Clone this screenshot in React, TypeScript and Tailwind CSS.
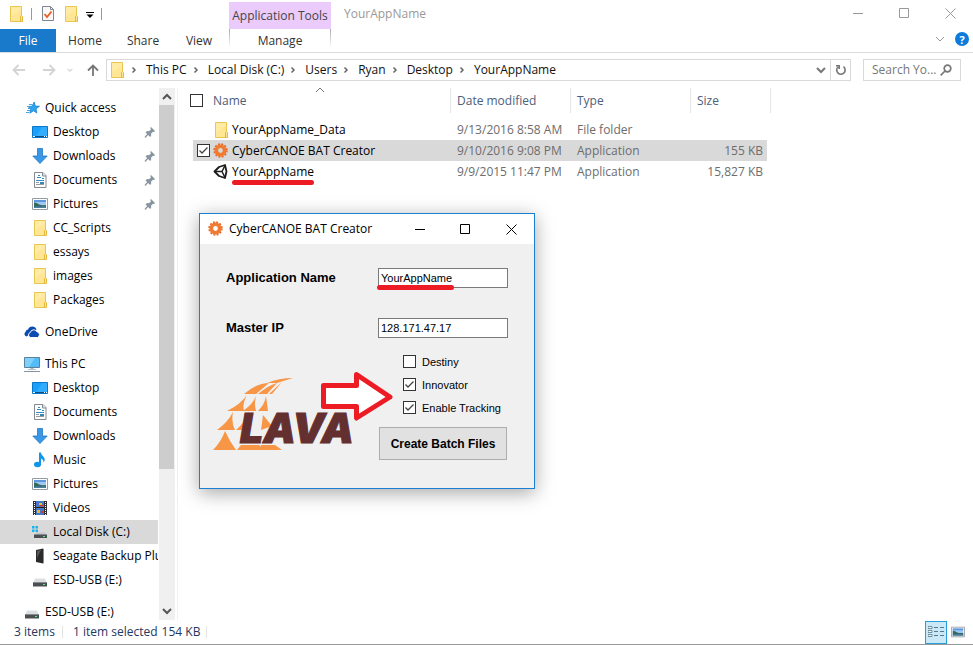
import React, { type ReactNode } from 'react';

type IconProps = { className?: string };

const FolderIcon = ({ className = 'h-4 w-4' }: IconProps) => (
  <svg viewBox="0 0 16 16" className={className} aria-hidden="true">
    <path d="M2.500.5h11v15h-11z" fill="#ffe695" stroke="#eac64f" />
    <path d="M3 1h10v3L3 10z" fill="#ffefae" opacity=".6" />
    <path d="M12.500 15.500v-5l1-1 1 1v5z" fill="#ffe695" stroke="#e4b83c" />
  </svg>
);

const PropertiesIcon = () => (
  <svg viewBox="0 0 14 17" className="h-[17px] w-3.5" aria-hidden="true">
    <path d="M1.500 1.500h8l3 3v11h-11z" fill="#f8f8f8" stroke="#7e8790" />
    <path d="M9.500 1.500v3h3" fill="none" stroke="#7e8790" />
    <path d="M3.500 9l2.500 3 4.500-5.500" fill="none" stroke="#ef5a22" strokeWidth="1.800" />
  </svg>
);

const StarIcon = ({ className = 'h-4 w-4' }: IconProps) => (
  <svg viewBox="0 0 16 16" className={className} aria-hidden="true">
    <path d="M10.200 2l1 4 4.300.3-3.500 2.400.8 4.300-3.300-2.200-3.700 2.400 1.100-4.200L4 6.500l4.200-.3z" fill="#2aa5ee" stroke="#1681cd" strokeWidth=".8" />
    <path d="M5 4.500h3.500M3 6.500h3M4 8.500h2M3 10.500h3M2 12.500h3" stroke="#43a6e4" />
  </svg>
);

const DesktopIcon = ({ className = 'h-4 w-4' }: IconProps) => (
  <svg viewBox="0 0 16 16" className={className} aria-hidden="true">
    <path d="M.5 2.500h15v11H.5z" fill="#18a0fb" stroke="#0b76c5" />
    <path d="M10 3h5v9H4z" fill="#4db8ff" opacity=".5" />
    <path d="M1 12.500h14" stroke="#0a4f88" />
    <path d="M1 12.500h2M12 12.500h1M14 12.500h1" stroke="#fff" />
  </svg>
);

const DownloadIcon = ({ className = 'h-4 w-4' }: IconProps) => (
  <svg viewBox="0 0 16 16" className={className} aria-hidden="true">
    <path d="M5.500.5h5V8h4.700L8 15.500.8 8h4.700z" fill="#3997e6" stroke="#2577c4" strokeWidth=".8" />
  </svg>
);

const DocumentIcon = ({ className = 'h-4 w-4' }: IconProps) => (
  <svg viewBox="0 0 16 16" className={className} aria-hidden="true">
    <path d="M2.500.5h8.500l3 3v12H2.500z" fill="#fff" stroke="#84898d" />
    <path d="M10.500.5v3.500h3.500" fill="#e8e8e8" stroke="#84898d" />
    <path d="M6 3.500h2M5 5.500h4M10 6.500h2M4 8.500h8" stroke="#2c8fcb" />
    <path d="M4 10.500h3M4 12.500h8" stroke="#9a9a9a" />
    <path d="M8 10h4v2H8z" fill="#3987b0" />
  </svg>
);

const PictureIcon = ({ className = 'h-4 w-4' }: IconProps) => (
  <svg viewBox="0 0 16 16" className={className} aria-hidden="true">
    <path d="M.5 2.500h15v11H.5z" fill="#fff" stroke="#969ba0" />
    <path d="M2 4h12v8H2z" fill="#9cc8f3" />
    <path d="M2 4h12v2H2z" fill="#5c96e0" />
    <path d="M2 6.500c3 0 4 2 7 2.500s4 0 5 0v3H2z" fill="#37675c" />
    <path d="M2 10.500h12V12H2z" fill="#4a7fa5" />
  </svg>
);

const CloudIcon = ({ className = 'h-4 w-4' }: IconProps) => (
  <svg viewBox="0 0 16 16" className={className} aria-hidden="true">
    <path d="M2.500 12.500A2.500 2.500 0 0 1 1.500 8 3 3 0 0 1 4 5.500 4.500 4.500 0 0 1 12.500 5.500" fill="#0c4bb0" />
    <path d="M6.500 13.500a2.600 2.600 0 0 1-.2-5 3.500 3.500 0 0 1 6.500-.8A3 3 0 0 1 13.500 13.500z" fill="#0c4bb0" stroke="#fff" strokeWidth="1" />
  </svg>
);

const ComputerIcon = ({ className = 'h-4 w-4' }: IconProps) => (
  <svg viewBox="0 0 16 16" className={className} aria-hidden="true">
    <path d="M.5 1.500h15v10H.5z" fill="#54bcf8" stroke="#5b8296" />
    <path d="M1 2h10L5 11H1z" fill="#93d8ff" opacity=".7" />
    <path d="M6.500 12h3v1h-3z" fill="#aab7c0" />
    <path d="M4 13.500h8" stroke="#b8c3cc" />
    <path d="M0 15.500h16" stroke="#8494a3" />
  </svg>
);

const MusicIcon = ({ className = 'h-4 w-4' }: IconProps) => (
  <svg viewBox="0 0 16 16" className={className} aria-hidden="true">
    <ellipse cx="5.500" cy="12.500" rx="3.500" ry="2.800" fill="#1095ea" />
    <path d="M7 .5h2c0 3 4 4 3.700 7.500-.1 1.300-.7 2-1.200 2.500.3-2-.8-3.300-2.500-4v6H7z" fill="#1095ea" />
  </svg>
);

const VideoIcon = ({ className = 'h-4 w-4' }: IconProps) => (
  <svg viewBox="0 0 16 16" className={className} aria-hidden="true">
    <path d="M1 1h14v14H1z" fill="#2f2f33" />
    <path d="M4 1h8v14H4z" fill="#4879c9" />
    <path d="M4 7.500h8" stroke="#222" />
    <path d="M7 3h3v2H7zM5 10h3v3H5z" fill="#f2b632" />
    <path d="M8 5h3v1.500H8zM9 11h2v2H9z" fill="#c93a2b" />
    <path d="M2.500 2v13M13.500 2v13" stroke="#fff" strokeDasharray="1 1" />
  </svg>
);

const DriveIcon = ({ className = 'h-4 w-4' }: IconProps) => (
  <svg viewBox="0 0 16 16" className={className} aria-hidden="true">
    <path d="M3 6.500h10l1.500 4h-13z" fill="#dcdfe1" />
    <path d="M1 10h14v4.500H1z" fill="#4b4f52" />
    <path d="M1 10.500h14" stroke="#85898c" />
    <path d="M11 12h2v1h-2z" fill="#4cf06a" />
  </svg>
);

const SystemDriveIcon = ({ className = 'h-4 w-4' }: IconProps) => (
  <svg viewBox="0 0 16 16" className={className} aria-hidden="true">
    <path d="M0 2h2.500v2.500H0zM3.500 2H6v2.500H3.500zM0 5.500h2.500V8H0zM3.500 5.500H6V8H3.500z" fill="#18b4f0" />
    <path d="M4 8.500h9l1.500 2.500h-12z" fill="#c4c8ca" />
    <path d="M2 10.500h13v3.500H2z" fill="#4b4f52" />
    <path d="M11 12h2v1h-2z" fill="#4cf06a" />
  </svg>
);

const BackupDriveIcon = ({ className = 'h-4 w-4' }: IconProps) => (
  <svg viewBox="0 0 16 16" className={className} aria-hidden="true">
    <path d="M4 2l7-1.500v15L4 14z" fill="#2b2b2b" />
    <path d="M11 .5l1 .5v14l-1 .5z" fill="#8a8a8a" />
    <path d="M5 3l4-1-4 8z" fill="#565656" />
  </svg>
);

const GearIcon = ({ className = 'h-4 w-4' }: IconProps) => (
  <svg viewBox="0 0 16 16" className={className} aria-hidden="true">
    <circle cx="7.500" cy="7.500" r="6.300" fill="none" stroke="#e2692a" strokeWidth="1.800" strokeDasharray="1.900 1.399" />
    <circle cx="7.500" cy="7.500" r="4.200" fill="none" stroke="#f07a30" strokeWidth="3.600" />
  </svg>
);

const UnityIcon = ({ className = 'h-4 w-4' }: IconProps) => (
  <svg viewBox="0 0 16 16" className={className} aria-hidden="true">
    <path d="M1.500 7.500L6 3 12 1 13.500 7.500 12 14 6 12z" fill="#fff" stroke="#1d1d1d" strokeWidth="1.800" strokeLinejoin="round" />
    <path d="M1.500 7.500H9M9 7.500L12 1.500M9 7.500L12 13.500" stroke="#1d1d1d" strokeWidth="1.500" />
  </svg>
);

const PinIcon = () => (
  <svg viewBox="0 0 12 12" className="h-3 w-3" aria-hidden="true">
    <path d="M7 1l4 4-1 1-1-.3-2 2 .2 2L6 11 1.500 6.300 3 5l2 .2 2-2L6.200 2z" fill="#8795a1" />
    <path d="M1 11.500L4 8" stroke="#8795a1" strokeWidth="1.200" />
  </svg>
);

const Chevron = ({ d, className }: { d: string; className: string }) => (
  <svg viewBox="0 0 10 10" className={className} fill="none" stroke="currentColor" aria-hidden="true">
    <path d={d} />
  </svg>
);

const RIGHT = 'M3.500 2.500l2.500 2.500-2.500 2.500';
const DOWN = 'M1 3l4 4 4-4';
const UP = 'M1 7l4-4 4 4';

function Glyph({ kind }: { kind: 'min' | 'max' | 'close' }) {
  return (
    <svg viewBox="0 0 11 11" className="h-[11px] w-[11px]" fill="none" stroke="currentColor" aria-hidden="true">
      {kind === 'min' && <path d="M0 5.500h10" />}
      {kind === 'max' && <path d="M.5.5h9v9h-9z" />}
      {kind === 'close' && <path d="M.5.5l10 10M10.500.5l-10 10" />}
    </svg>
  );
}

function TitleBar() {
  return (
    <header className="flex h-[52px] items-stretch">
      <div className="flex flex-col">
        <div className="flex h-[29px] items-center gap-[7px] pb-0.5 pl-2">
          <FolderIcon />
          <span className="h-3 w-px bg-[#999]" />
          <span className="flex items-center gap-2 pl-0.5">
            <PropertiesIcon />
            <FolderIcon />
          </span>
          <button aria-label="Customize Quick Access Toolbar" className="pt-0.5">
            <svg viewBox="0 0 8 6" className="h-1.5 w-2"><path d="M0 .5h8" stroke="#000" /><path d="M.5 2.500h7L4 6z" /></svg>
          </button>
          <span className="h-3 w-px bg-[#999]" />
        </div>
        <nav className="flex h-[23px] w-[229px] text-[#333]">
          <button className="w-14 bg-[#1979ca] text-white">File</button>
          <button className="w-[58px]">Home</button>
          <button className="w-[58px]">Share</button>
          <button className="w-[54px]">View</button>
        </nav>
      </div>
      <div className="flex w-[102px] flex-col pt-0.5 text-[#444]">
        <div className="flex h-[27px] items-center justify-center bg-[#ebcbfc] whitespace-nowrap">Application Tools</div>
        <div className="flex h-[19px] justify-between">
          <span className="w-px bg-linear-to-b from-[#aaa] to-white" />
          <button className="h-[23px] text-[#333]">Manage</button>
          <span className="w-px bg-linear-to-b from-[#aaa] to-white" />
        </div>
      </div>
      <h1 className="flex h-7 flex-1 items-center pl-[13px] text-[#999]">YourAppName</h1>
      <div className="flex flex-col items-end text-[#999]">
        <div className="flex h-[27px]">
          <button aria-label="Minimize" className="grid w-[46px] place-items-center"><Glyph kind="min" /></button>
          <button aria-label="Maximize" className="grid w-[46px] place-items-center"><Glyph kind="max" /></button>
          <button aria-label="Close" className="grid w-[46px] place-items-center"><Glyph kind="close" /></button>
        </div>
        <div className="flex h-[26px] items-center gap-2.5 pr-1">
          <button aria-label="Collapse ribbon"><Chevron d={DOWN} className="h-2.5 w-2.5" /></button>
          <button aria-label="Help" className="grid h-3.5 w-3.5 place-items-center rounded-full bg-[#0c7bdc] text-[11px] leading-none font-bold text-white">?</button>
        </div>
      </div>
    </header>
  );
}

const crumbs = ['This PC', 'Local Disk (C:)', 'Users', 'Ryan', 'Desktop', 'YourAppName'];

function AddressBar() {
  return (
    <div className="flex h-9 items-center border-t border-[#dadbdc] pr-3 pb-px">
      <div className="flex w-[106px] items-center pl-3 text-[#d4d4d4]">
        <button aria-label="Back" className="w-[30px]">
          <svg viewBox="0 0 14 12" className="h-3 w-3.5" fill="none" stroke="currentColor" strokeWidth="1.800"><path d="M13 6H2M6.500 1L1.500 6l5 5" /></svg>
        </button>
        <button aria-label="Forward" className="w-[25px]">
          <svg viewBox="0 0 14 12" className="h-3 w-3.5" fill="none" stroke="currentColor" strokeWidth="1.800"><path d="M1 6h11M7.500 1l5 5-5 5" /></svg>
        </button>
        <button aria-label="Recent locations" className="w-5"><Chevron d={DOWN} className="h-1.5 w-1.5 stroke-2" /></button>
        <button aria-label="Up">
          <svg viewBox="0 0 12 12" className="h-3 w-3" fill="none" stroke="#777" strokeWidth="1.800"><path d="M6 12V1.500M1 6.500l5-5 5 5" /></svg>
        </button>
      </div>
      <div className="flex h-[22px] flex-1 items-center border border-[#d9d9d9] pl-0.5">
        <FolderIcon className="h-4 w-4 shrink-0" />
        <nav className="flex flex-1 items-center pl-1 text-[#111]" aria-label="Breadcrumb">
          {crumbs.map((c) => (
            <span key={c} className="flex items-center">
              <Chevron d={RIGHT} className="h-2.5 w-2.5 stroke-[1.5px] text-[#666]" />
              <button className="pr-1 pl-[7px] whitespace-nowrap">{c}</button>
            </span>
          ))}
        </nav>
        <button aria-label="Previous locations" className="grid w-[18px] place-items-center text-[#777]"><Chevron d={DOWN} className="h-2.5 w-2.5 stroke-2" /></button>
        <button aria-label="Refresh" className="grid h-full w-5 place-items-center border-l border-[#d9d9d9] text-[#777]">
          <svg viewBox="0 0 12 12" className="h-3 w-3" fill="none" stroke="currentColor" strokeWidth="1.600"><path d="M3 3a4.200 4.200 0 1 0 5.500-.3M1 1.800h3.200V5" /></svg>
        </button>
      </div>
      <div className="ml-3 flex h-[22px] w-[98px] items-center border border-[#d9d9d9] pl-2">
        <input aria-label="Search" placeholder="Search Yo..." className="w-[68px] bg-transparent outline-none placeholder:text-[#777]" />
        <svg viewBox="0 0 12 12" className="h-3 w-3" fill="none" stroke="#777" strokeWidth="1.700" aria-hidden="true"><circle cx="7.500" cy="4.500" r="3.300" /><path d="M5 7l-4.300 4.300" /></svg>
      </div>
    </div>
  );
}

type NavEntry = { label: string; icon: (p: IconProps) => ReactNode; pinned?: boolean; selected?: boolean };

const groups: { root: NavEntry; items: NavEntry[] }[] = [
  {
    root: { label: 'Quick access', icon: StarIcon },
    items: [
      { label: 'Desktop', icon: DesktopIcon, pinned: true },
      { label: 'Downloads', icon: DownloadIcon, pinned: true },
      { label: 'Documents', icon: DocumentIcon, pinned: true },
      { label: 'Pictures', icon: PictureIcon, pinned: true },
      { label: 'CC_Scripts', icon: FolderIcon },
      { label: 'essays', icon: FolderIcon },
      { label: 'images', icon: FolderIcon },
      { label: 'Packages', icon: FolderIcon },
    ],
  },
  { root: { label: 'OneDrive', icon: CloudIcon }, items: [] },
  {
    root: { label: 'This PC', icon: ComputerIcon },
    items: [
      { label: 'Desktop', icon: DesktopIcon },
      { label: 'Documents', icon: DocumentIcon },
      { label: 'Downloads', icon: DownloadIcon },
      { label: 'Music', icon: MusicIcon },
      { label: 'Pictures', icon: PictureIcon },
      { label: 'Videos', icon: VideoIcon },
      { label: 'Local Disk (C:)', icon: SystemDriveIcon, selected: true },
      { label: 'Seagate Backup Plus', icon: BackupDriveIcon },
      { label: 'ESD-USB (E:)', icon: DriveIcon },
    ],
  },
  { root: { label: 'ESD-USB (E:)', icon: DriveIcon }, items: [] },
];

function NavRow({ entry, nested }: { entry: NavEntry; nested?: boolean }) {
  const Icon = entry.icon;
  return (
    <li className={`flex h-6 items-center gap-[5px] pr-0.5 ${nested ? 'pl-8' : 'pl-6'} ${entry.selected ? 'bg-[#d9d9d9]' : ''}`}>
      <Icon className="h-4 w-4 shrink-0" />
      <span className="flex-1 whitespace-nowrap">{entry.label}</span>
      {entry.pinned && <PinIcon />}
    </li>
  );
}

function Sidebar() {
  return (
    <aside className="flex w-[178px] shrink-0 border-r border-[#f0f0f0]">
      <nav className="h-[532px] w-[158px] overflow-hidden pt-2 text-black">
        <ul className="flex flex-col gap-2">
          {groups.map((g) => (
            <li key={g.root.label}>
              <ul>
                <NavRow entry={g.root} />
                {g.items.map((i) => <NavRow key={i.label} entry={i} nested />)}
              </ul>
            </li>
          ))}
        </ul>
      </nav>
      <div className="ml-px flex h-[532px] w-4 flex-col bg-[#f0f0f0] text-[#555]">
        <span className="grid h-[17px] place-items-center"><Chevron d={UP} className="h-2.5 w-2.5 stroke-2" /></span>
        <span className="h-[364px] w-[15px] bg-[#cdcdcd]" />
        <span className="flex flex-1 items-end justify-center pb-1"><Chevron d={DOWN} className="h-2.5 w-2.5 stroke-2" /></span>
      </div>
    </aside>
  );
}

function Tick({ id, label, on, hidden }: { id: string; label: string; on?: boolean; hidden?: boolean }) {
  return (
    <span className="grid h-[13px] w-[13px] shrink-0">
      {!hidden && <input id={id} type="checkbox" aria-label={label} defaultChecked={on} className="peer col-start-1 row-start-1 appearance-none border border-[#333] bg-white" />}
      {!hidden && (
        <svg viewBox="0 0 13 13" className="pointer-events-none invisible col-start-1 row-start-1 h-[13px] w-[13px] peer-checked:visible" fill="none" stroke="#444" strokeWidth="1.300" aria-hidden="true"><path d="M2.500 6.500L5 9l5.500-5.500" /></svg>
      )}
    </span>
  );
}

const files = [
  { name: 'YourAppName_Data', icon: FolderIcon, date: '9/13/2016 8:58 AM', type: 'File folder', size: '' },
  { name: 'CyberCANOE BAT Creator', icon: GearIcon, date: '9/10/2016 9:08 PM', type: 'Application', size: '155 KB', selected: true },
  { name: 'YourAppName', icon: UnityIcon, date: '9/9/2015 11:47 PM', type: 'Application', size: '15,827 KB', marked: true },
];

function FileTable() {
  return (
    <table className="ml-3 w-[581px] table-fixed border-separate border-spacing-0 self-start text-left whitespace-nowrap">
      <thead className="text-[#4c607a]">
        <tr className="h-[25px]">
          <th className="w-[260px] p-0 font-normal">
            <span className="relative flex items-center gap-2.5">
              <Tick id="all" label="Select all" />
              Name
              <Chevron d={UP} className="absolute -top-2 left-[125px] h-2.5 w-2.5 text-[#777]" />
            </span>
          </th>
          <th className="w-[120px] border-l border-[#e5e5e5] py-0 pr-0 pl-1.5 font-normal">Date modified</th>
          <th className="w-[120px] border-l border-[#e5e5e5] py-0 pr-0 pl-1.5 font-normal">Type</th>
          <th className="border-x border-[#e5e5e5] py-0 pr-0 pl-1.5 font-normal">Size</th>
        </tr>
      </thead>
      <tbody className="text-[#6d6d6d]">
        <tr className="h-1.5"><td colSpan={4} className="p-0" /></tr>
        {files.map((f) => {
          const Icon = f.icon;
          return (
            <tr key={f.name} className={`h-[21px] ${f.selected ? '[&>td]:bg-[#d9d9d9]' : ''}`}>
              <td className="border-l-[3px] border-white p-0 pl-1">
                <span className="flex items-center gap-[3px]">
                  <Tick id={`row-${f.name}`} label={f.name} on={f.selected} hidden={!f.selected} />
                  <Icon className="h-4 w-4 shrink-0" />
                  <span className="relative text-black">
                    {f.name}
                    {f.marked && <span className="absolute top-4 right-0 left-0 h-[5px] rounded-full bg-[#ed1c24]" />}
                  </span>
                </span>
              </td>
              <td className="p-0 pl-[7px]">{f.date}</td>
              <td className="p-0 pl-[7px]">{f.type}</td>
              <td className="border-r-4 border-white p-0 pr-1 text-right">{f.size}</td>
            </tr>
          );
        })}
      </tbody>
    </table>
  );
}

function LavaLogo() {
  return (
    <svg viewBox="0 0 140 74" className="h-[74px] w-[140px] overflow-visible" role="img" aria-label="LAVA">
      <g fill="#f79646">
        <path d="M0 72Q8 64 12 53Q17 64 23 72zM24 72l4-5h18l5 5zM47 72l1-5h14l7 5z" />
        <path d="M4 52Q15 44 20 34Q18 44 22 52zM23 52Q32 44 36 34v18zM48 52l2-15 9 11z" />
        <path d="M14 33Q28 26 34 17Q29 26 31 33zM30 33Q40 26 43 18Q41 26 43 33zM45 33Q52 26 53 18L55 33z" />
        <path d="M31 16Q44 5 56 5L43 16zM45 16Q56 7 64 5L54 16zM56 16L69 4 59 16z" />
        <path d="M54 5Q66 0 80 0L64 5z" />
      </g>
      <text x="27" y="65" fontFamily="Inter, sans-serif" fontSize="41" fontStyle="italic" fontWeight="900" fill="#632f2f" stroke="#632f2f" strokeWidth="1">LAVA</text>
    </svg>
  );
}

function Field({ id, label, value, marked }: { id: string; label: string; value: string; marked?: boolean }) {
  return (
    <>
      <label htmlFor={id} className="pl-[13px] font-['Liberation_Sans',sans-serif] text-[13px] font-bold">{label}</label>
      <span className="relative flex">
        <input id={id} defaultValue={value} className="h-5 w-[130px] border border-[#7a7a7a] bg-white px-0.5 font-['Liberation_Sans',sans-serif] text-[11px] outline-none" />
        {marked && <span className="absolute top-[17px] -left-px h-[5px] w-[77px] rounded-full bg-[#ed1c24]" />}
      </span>
    </>
  );
}

const targets = [
  { label: 'Destiny', on: false },
  { label: 'Innovator', on: true },
  { label: 'Enable Tracking', on: true },
];

function BatchDialog() {
  return (
    <section role="dialog" aria-label="CyberCANOE BAT Creator" className="absolute top-[213px] left-[199px] w-[336px] border border-[#1b80d3] bg-[#f0f0f0] text-black shadow-[0_4px_18px_rgba(0,0,0,0.35)]">
      <header className="flex h-[30px] items-center bg-white pl-2">
        <GearIcon />
        <h2 className="flex-1 pl-[5px] whitespace-nowrap">CyberCANOE BAT Creator</h2>
        <button aria-label="Minimize dialog" className="grid w-[45px] place-items-center"><Glyph kind="min" /></button>
        <button aria-label="Maximize dialog" className="grid w-[45px] place-items-center"><Glyph kind="max" /></button>
        <button aria-label="Close dialog" className="grid w-[46px] place-items-center"><Glyph kind="close" /></button>
      </header>
      <form className="grid grid-cols-[165px_1fr] items-center pt-6 pb-7 pl-[13px]" onSubmit={(e) => e.preventDefault()}>
        <Field id="app" label="Application Name" value="YourAppName" marked />
        <span className="col-span-2 h-[30px]" />
        <Field id="ip" label="Master IP" value="128.171.47.17" />
        <div className="self-end pb-2"><LavaLogo /></div>
        <div className="pt-3">
          {targets.map((t) => (
            <label key={t.label} htmlFor={t.label} className="ml-[25px] flex h-[23px] items-center gap-1.5 font-['Liberation_Sans',sans-serif] text-[11px]">
              <Tick id={t.label} label={t.label} on={t.on} />
              {t.label}
            </label>
          ))}
          <button className="mt-2 ml-px h-[33px] w-32 border border-[#adadad] bg-[#e1e1e1] font-['Liberation_Sans',sans-serif] text-[12px] font-bold whitespace-nowrap">Create Batch Files</button>
        </div>
      </form>
      <svg viewBox="0 0 72 50" className="absolute top-[158px] left-[121px] h-[50px] w-[72px]" aria-hidden="true">
        <path d="M2.500 13.500h33v-11L69 25 35.500 46V34.500h-33z" fill="#fff" stroke="#ed1c24" strokeWidth="5" strokeLinejoin="round" />
      </svg>
    </section>
  );
}

function StatusBar() {
  return (
    <footer className="flex h-[25px] items-center border-b border-[#999] pr-1 pl-3.5 text-[#24385e]">
      <span className="w-12">3 items</span>
      <span className="h-3 w-px bg-[#e5e5e5]" />
      <span className="flex gap-1 pr-1.5 pl-2.5 whitespace-nowrap">
        <span>1 item selected</span>
        <span>154 KB</span>
      </span>
      <span className="h-3 w-px bg-[#e5e5e5]" />
      <span className="flex-1" />
      <button aria-label="Details view" className="grid h-[23px] w-[22px] place-items-center border border-[#26a0da] bg-[#cbe8f6]">
        <svg viewBox="0 0 16 12" className="h-3 w-4"><path d="M0 .5h4v2H0zM0 4.500h4v2H0zM0 8.500h4v2H0z" fill="#fff" stroke="#52798f" strokeWidth=".8" /><path d="M6 1.500h4M6 5.500h4M6 9.500h4M12 1.500h4M12 5.500h4M12 9.500h4" stroke="#52798f" /></svg>
      </button>
      <button aria-label="Large icons view" className="grid w-[22px] place-items-center"><PictureIcon className="h-3.5 w-3.5" /></button>
    </footer>
  );
}

export default function App() {
  return (
    <div className="relative flex min-h-screen flex-col bg-white font-['Open_Sans','Noto_Sans',sans-serif] text-[12px] leading-4">
      <TitleBar />
      <AddressBar />
      <main className="flex flex-1">
        <Sidebar />
        <FileTable />
      </main>
      <StatusBar />
      <BatchDialog />
    </div>
  );
}
